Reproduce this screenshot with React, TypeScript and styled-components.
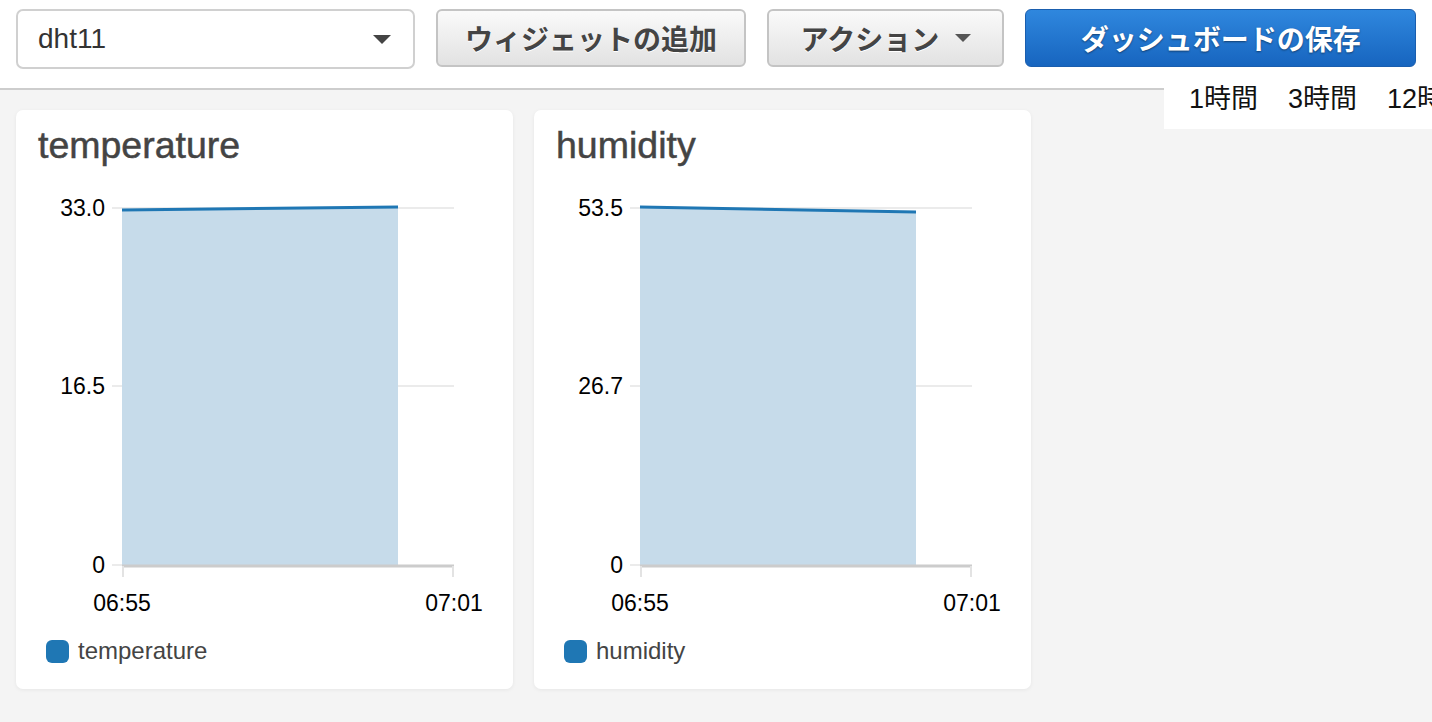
import styled, { createGlobalStyle } from 'styled-components'

const GlobalStyle = createGlobalStyle`
  html, body {
    margin: 0;
    padding: 0;
    height: 100%;
    overflow: hidden;
    background: #f4f4f4;
    font-family: "Liberation Sans", "Noto Sans CJK JP", sans-serif;
  }
  * { box-sizing: border-box; }
`

const Page = styled.div`
  width: 1432px;
  height: 722px;
  background: #f4f4f4;
`

const Header = styled.header`
  position: relative;
  height: 90px;
  padding: 9px 16px 0;
  display: flex;
  align-items: flex-start;
  gap: 21px;
  background: #fff;
  border-bottom: 2px solid #cdcdcd;
`

const Select = styled.div`
  width: 399px;
  height: 60px;
  padding: 0 22px 0 20px;
  display: flex;
  align-items: center;
  justify-content: space-between;
  border: 2px solid #d0d0d0;
  border-radius: 7px;
  background: #fff;
  color: #333;
  font-size: 28px;
`

const Caret = styled.span<{ $w: number; $color: string }>`
  width: 0;
  height: 0;
  border-left: ${({ $w }) => $w / 2}px solid transparent;
  border-right: ${({ $w }) => $w / 2}px solid transparent;
  border-top: ${({ $w }) => $w / 2}px solid ${({ $color }) => $color};
`

const Button = styled.button<{ $w: number; $primary?: boolean }>`
  width: ${({ $w }) => $w}px;
  height: 58px;
  display: flex;
  align-items: center;
  justify-content: center;
  gap: 16px;
  border-radius: 6px;
  font-family: inherit;
  font-size: 28px;
  font-weight: bold;
  cursor: pointer;
  ${({ $primary }) =>
    $primary
      ? `
    color: #fff;
    background: linear-gradient(#2f87de, #1765bf);
    border: 1px solid #1a5eae;
    text-shadow: 0 1px 2px rgba(0, 0, 0, 0.45);
  `
      : `
    color: #444;
    background: linear-gradient(#fafafa, #e2e2e2);
    border: 2px solid #c4c4c4;
    text-shadow: 0 1px 0 #fff;
  `}
`

// time range popover, runs past the right edge of the window
const RangeMenu = styled.div`
  position: absolute;
  top: 80px;
  left: 1164px;
  right: 0;
  height: 49px;
  padding-left: 25px;
  display: flex;
  align-items: flex-start;
  gap: 30px;
  background: #fff;
  overflow: hidden;
  white-space: nowrap;
  font-size: 27px;
  line-height: 39px;
  color: #111;
`

const Content = styled.main`
  padding: 20px 16px;
  display: flex;
  gap: 21px;
`

const Card = styled.section`
  width: 497px;
  height: 579px;
  padding-top: 17px;
  display: flex;
  flex-direction: column;
  background: #fff;
  border-radius: 7px;
  box-shadow: 0 1px 4px rgba(0, 0, 0, 0.06);
`

const Title = styled.h2`
  margin: 0 0 16px 22px;
  font-size: 37.5px;
  line-height: 37px;
  font-weight: normal;
  color: #444;
  -webkit-text-stroke: 0.5px #444;
`

const ChartSvg = styled.svg`
  display: block;
  font-family: "Liberation Sans", sans-serif;
`

const Legend = styled.div`
  margin: 7px 0 0 30px;
  display: flex;
  align-items: center;
  gap: 9px;
  font-size: 24px;
  color: #444;
`

const Swatch = styled.span`
  width: 23px;
  height: 23px;
  border-radius: 6px;
  background: #1f77b4;
`

type Series = {
  name: string
  max: string
  mid: string
  start: number
  end: number
}

const series: Series[] = [
  { name: 'temperature', max: '33.0', mid: '16.5', start: 30, end: 27 },
  { name: 'humidity', max: '53.5', mid: '26.7', start: 27, end: 32 },
]

function Chart({ s }: { s: Series }) {
  const x0 = 106
  const x1 = 382
  const base = 385
  return (
    <ChartSvg width={497} height={450} viewBox="0 0 497 450">
      <line x1={96} x2={438} y1={28} y2={28} stroke="#ebebeb" strokeWidth={2} />
      <line x1={96} x2={438} y1={206} y2={206} stroke="#ebebeb" strokeWidth={2} />
      <line x1={96} x2={106} y1={385} y2={385} stroke="#ebebeb" strokeWidth={2} />
      <polygon
        points={`${x0},${s.start} ${x1},${s.end} ${x1},${base} ${x0},${base}`}
        fill="#c6dbea"
      />
      <line x1={x0} x2={x1} y1={s.start} y2={s.end} stroke="#1f77b4" strokeWidth={3} />
      <line x1={106} x2={438} y1={386} y2={386} stroke="#cccccc" strokeWidth={3} />
      <line x1={107} x2={107} y1={386} y2={397} stroke="#e3e3e3" strokeWidth={2} />
      <line x1={437} x2={437} y1={386} y2={397} stroke="#e3e3e3" strokeWidth={2} />
      <g fontSize={23} fill="#000" textAnchor="end">
        <text x={89} y={36}>{s.max}</text>
        <text x={89} y={214}>{s.mid}</text>
        <text x={89} y={393}>0</text>
      </g>
      <g fontSize={23} fill="#000" textAnchor="middle">
        <text x={106} y={431}>06:55</text>
        <text x={438} y={431}>07:01</text>
      </g>
    </ChartSvg>
  )
}

export default function App() {
  return (
    <Page>
      <GlobalStyle />
      <Header>
        <Select>
          <span>dht11</span>
          <Caret $w={18} $color="#444" />
        </Select>
        <Button $w={311}>ウィジェットの追加</Button>
        <Button $w={237}>
          アクション
          <Caret $w={16} $color="#555" />
        </Button>
        <Button $w={391} $primary>
          ダッシュボードの保存
        </Button>
        <RangeMenu>
          <span>1時間</span>
          <span>3時間</span>
          <span>12時間</span>
          <span>1日</span>
          <span>3日</span>
          <span>1週間</span>
        </RangeMenu>
      </Header>
      <Content>
        {series.map((s) => (
          <Card key={s.name}>
            <Title>{s.name}</Title>
            <Chart s={s} />
            <Legend>
              <Swatch />
              <span>{s.name}</span>
            </Legend>
          </Card>
        ))}
      </Content>
    </Page>
  )
}
